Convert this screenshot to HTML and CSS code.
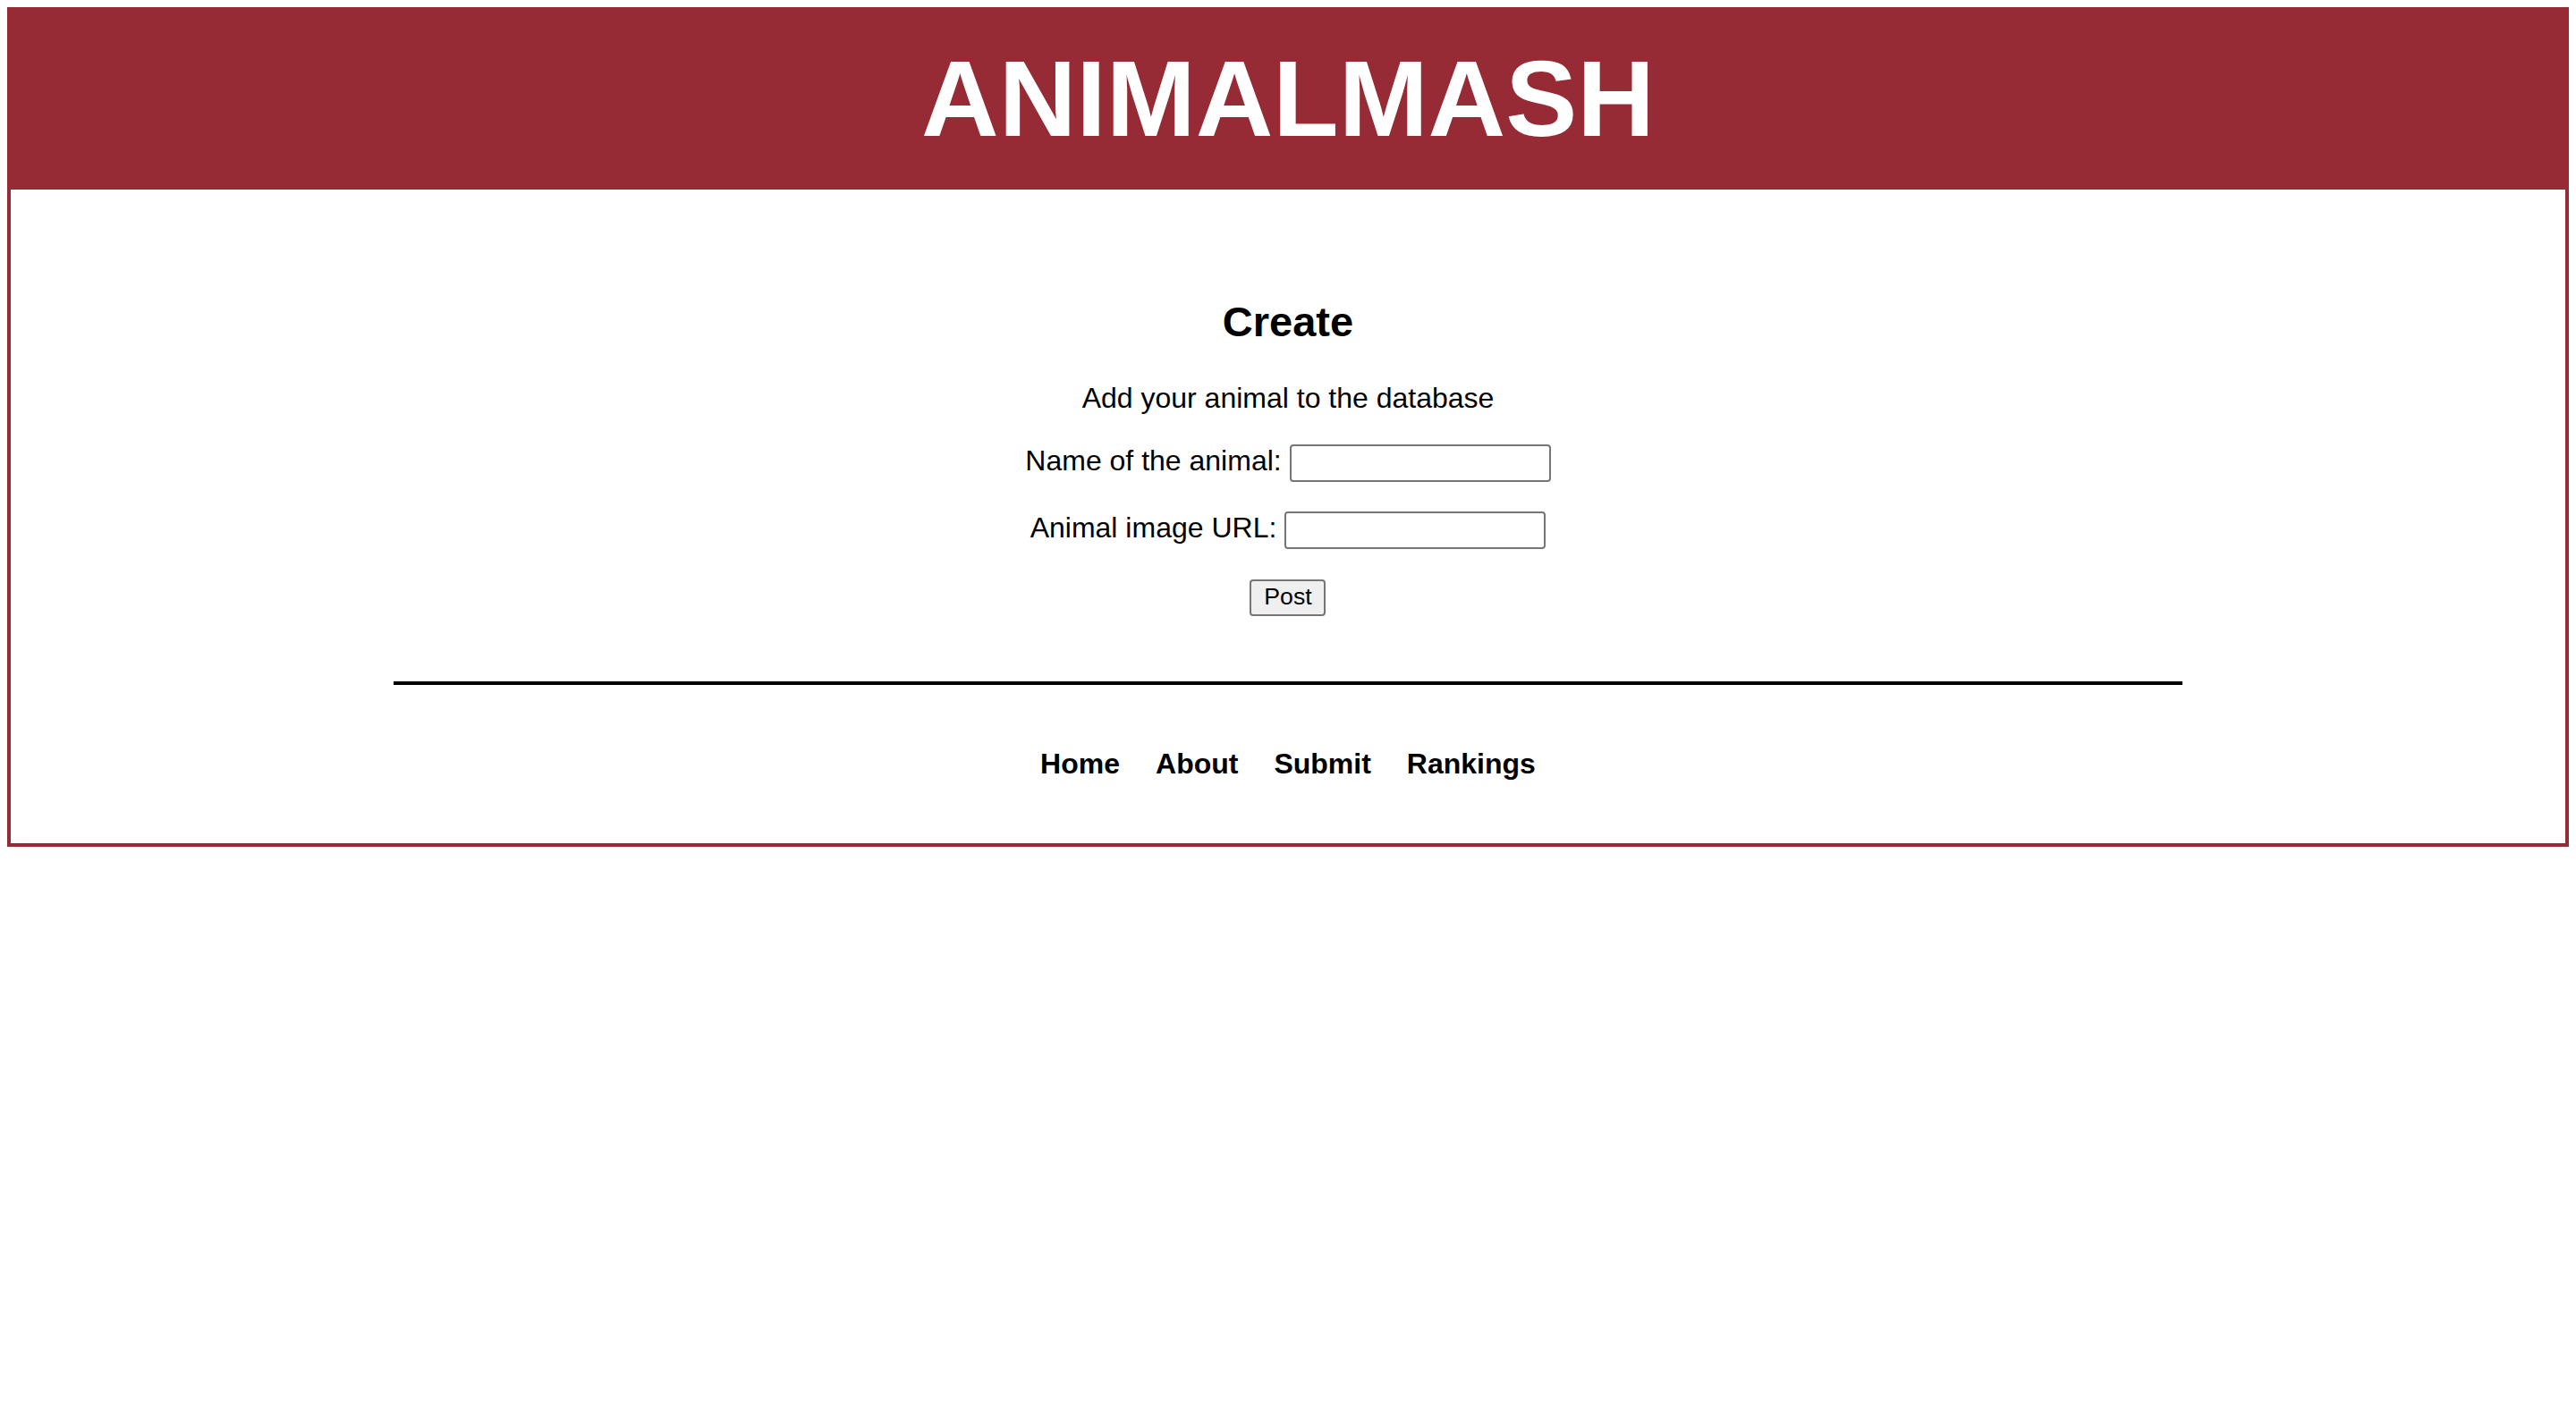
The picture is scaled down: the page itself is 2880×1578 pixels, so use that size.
FILE: index.html
```html
<!DOCTYPE html>
<html lang="en">
<head>
<meta charset="utf-8">
<title>ANIMALMASH</title>
<link rel="stylesheet" href="styles.css">
</head>
<body>
<div class="page">
  <header class="masthead">
    <h1 class="logo">ANIMALMASH</h1>
  </header>
  <main class="box">
    <h2 class="title">Create</h2>
    <p class="lead">Add your animal to the database</p>
    <form class="form">
      <div class="row">
        <label class="label" for="name">Name of the animal:</label>
        <input class="field" type="text" id="name">
      </div>
      <div class="row">
        <label class="label" for="url">Animal image URL:</label>
        <input class="field" type="text" id="url">
      </div>
      <div class="row">
        <button class="btn" type="button">Post</button>
      </div>
    </form>
    <hr class="rule">
    <nav class="nav">
      <a class="nav-link" href="#">Home</a>
      <a class="nav-link" href="#">About</a>
      <a class="nav-link" href="#">Submit</a>
      <a class="nav-link" href="#">Rankings</a>
    </nav>
  </main>
</div>
</body>
</html>
```

FILE: styles.css
```css
html, body {
  background: #ffffff;
}
body {
  margin: 8px;
  font-family: "Liberation Sans", Arial, sans-serif;
  color: #000;
}
.masthead {
  background: #962b35;
  height: 204px;
  display: flex;
  align-items: center;
  justify-content: center;
}
.logo {
  margin: 0;
  font-size: 120px;
  line-height: 204px;
  font-weight: 700;
  color: #ffffff;
}
.box {
  border: 4px solid #962b35;
  border-top: 0;
  padding: 121px 0 70px;
  display: flex;
  flex-direction: column;
  align-items: center;
}
.title {
  margin: 0;
  font-size: 47px;
  line-height: 54px;
  font-weight: 700;
}
.lead {
  margin: 40px 0 0;
  font-size: 32px;
  line-height: 37px;
}
.form {
  margin-top: 33px;
  display: flex;
  flex-direction: column;
  align-items: center;
  gap: 33px;
}
.row {
  display: flex;
  align-items: center;
  justify-content: center;
  gap: 9px;
  height: 42px;
}
.label {
  font-size: 32px;
  line-height: 37px;
  margin-top: -5px;
}
.field {
  box-sizing: border-box;
  width: 292px;
  height: 42px;
  margin: 0;
  border: 2px solid #767676;
  border-radius: 4px;
  background: #fff;
  padding: 2px 4px;
  font-family: "Liberation Sans", Arial, sans-serif;
  font-size: 26px;
}
.btn {
  box-sizing: border-box;
  width: 85px;
  height: 41px;
  margin: 0;
  padding: 0 0 2px;
  border: 2px solid #767676;
  border-radius: 4px;
  background: #efefef;
  color: #000;
  font-family: "Liberation Sans", Arial, sans-serif;
  font-size: 26.67px;
  line-height: 35px;
}
.rule {
  width: 2000px;
  height: 4px;
  border: 0;
  background: #000;
  margin: 73px 0 0;
}
.nav {
  margin-top: 70px;
  display: flex;
  gap: 40px;
}
.nav-link {
  font-size: 32px;
  line-height: 37px;
  font-weight: 700;
  color: #000;
  text-decoration: none;
}
```
